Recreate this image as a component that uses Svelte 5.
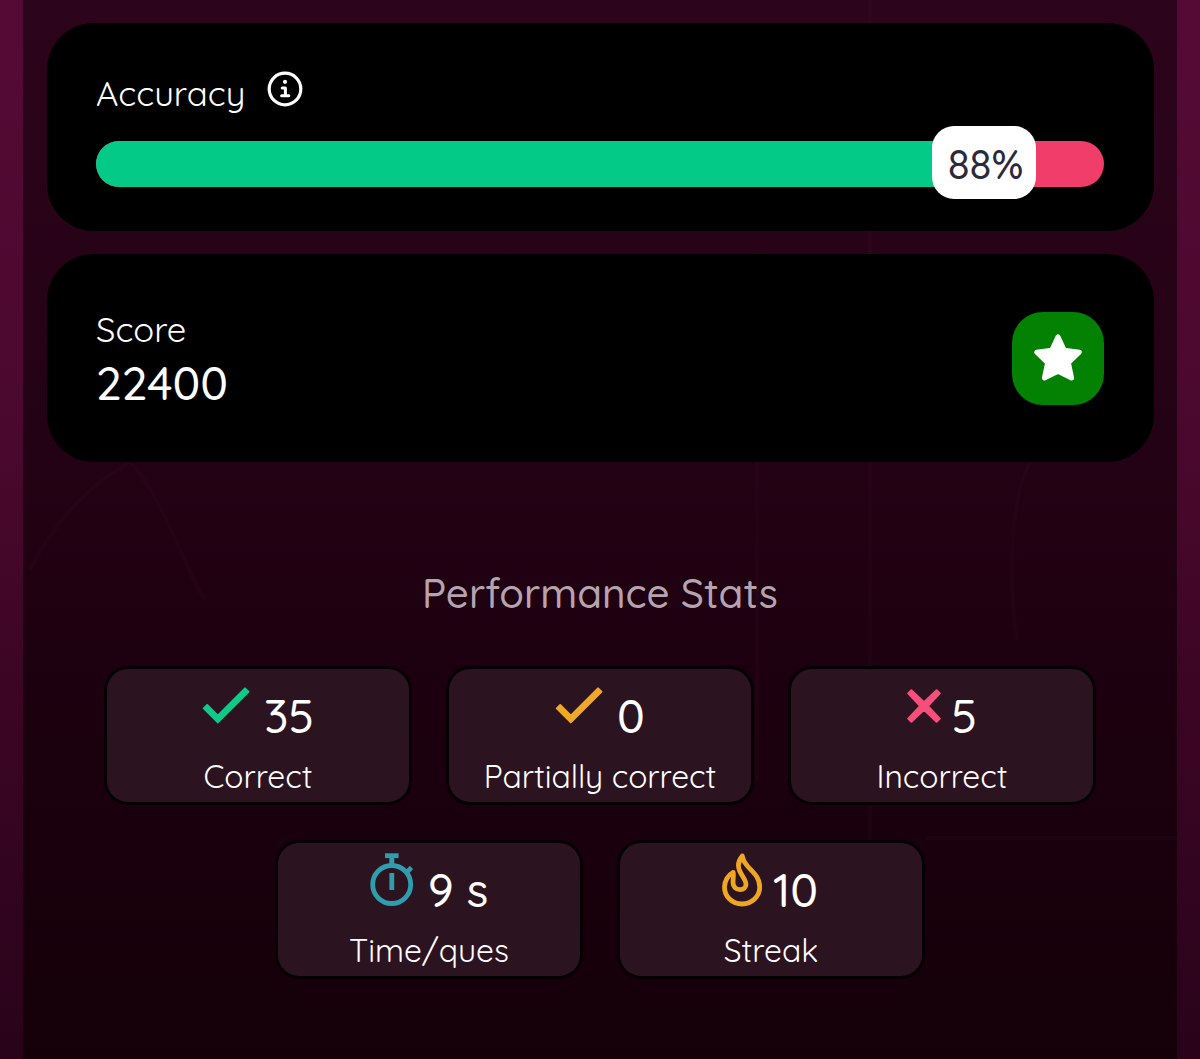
<script lang="ts">
  type Stat = { icon: string; value: string; label: string };

  const accuracy = 88;
  const score = 22400;

  const rows: Stat[][] = [
    [
      { icon: 'check', value: '35', label: 'Correct' },
      { icon: 'partial', value: '0', label: 'Partially correct' },
      { icon: 'cross', value: '5', label: 'Incorrect' }
    ],
    [
      { icon: 'timer', value: '9 s', label: 'Time/ques' },
      { icon: 'flame', value: '10', label: 'Streak' }
    ]
  ];
</script>

<main class="page">
  <div class="panel">
    <!-- faint line art behind the cards -->
    <svg class="backdrop" width="1154" height="1059" viewBox="23 0 1154 1059" fill="none" aria-hidden="true">
      <path d="M30 570C50 530 80 490 130 462C165 500 180 560 205 600" />
      <path d="M1030 462C1010 500 1008 580 1017 640" />
      <path d="M870 0V840M757 462V780" />
      <path d="M925 838H1177" />
    </svg>

    <section class="card accuracy">
      <div class="accuracy-head">
        <span class="caption">Accuracy</span>
        <svg class="info" width="36" height="36" viewBox="0 0 36 36" fill="none">
          <circle cx="18" cy="18" r="15.8" stroke="#fff" stroke-width="3.2" />
          <circle cx="18" cy="10.8" r="2.1" fill="#fff" />
          <path d="M15.2 17H18.4V24.8M14.6 24.8H21.8" stroke="#fff" stroke-width="3" stroke-linecap="round" stroke-linejoin="round" />
        </svg>
      </div>
      <div class="bar">
        <div class="bar-fill" style="width: {accuracy}%"></div>
        <div class="bar-badge" style="left: {accuracy}%">{accuracy}%</div>
      </div>
    </section>

    <section class="card score">
      <div class="score-text">
        <span class="caption">Score</span>
        <span class="score-value">{score}</span>
      </div>
      <div class="score-icon">
        <svg width="50" height="50" viewBox="0 0 50 50">
          <path d="M25 3.8L31.2 17.3L46.3 19.2L35.4 29.7L38.6 45L25 38.3L11.4 45L14.6 29.7L3.7 19.2L18.8 17.3Z" fill="#fff" stroke="#fff" stroke-width="5" stroke-linejoin="round" />
        </svg>
      </div>
    </section>

    <h2>Performance Stats</h2>

    <div class="stats">
      {#each rows as row}
        <div class="stats-row">
          {#each row as stat}
            <div class="stat">
              <div class="stat-top {stat.icon}">
                {#if stat.icon === 'check' || stat.icon === 'partial'}
                  <svg width="48" height="38" viewBox="0 0 48 38">
                    <path d="M5.2 18L15.8 28.6L43 1.4L46.4 4.8L15.8 35.4L1.8 21.4Z" fill="currentColor" stroke="currentColor" stroke-width="2" stroke-linejoin="round" />
                  </svg>
                {:else if stat.icon === 'cross'}
                  <svg width="34" height="34" viewBox="0 0 34 34">
                    <path d="M4.4 1.2L17 13.2L29.6 1.2L32.8 4.4L20.8 17L32.8 29.6L29.6 32.8L17 20.8L4.4 32.8L1.2 29.6L13.2 17L1.2 4.4Z" fill="currentColor" stroke="currentColor" stroke-width="2" stroke-linejoin="round" />
                  </svg>
                {:else if stat.icon === 'timer'}
                  <svg width="44" height="54" viewBox="0 0 44 54" fill="none" stroke="currentColor">
                    <circle cx="21.7" cy="31.5" r="19" stroke-width="4.8" />
                    <path d="M15 2.7H28.6" stroke-width="4.8" />
                    <path d="M21.8 4V12" stroke-width="5" />
                    <path d="M21.8 20V37" stroke-width="4.8" />
                    <path d="M36 20L41.5 14.5" stroke-width="4.6" />
                  </svg>
                {:else}
                  <svg width="40" height="54" viewBox="0 0 40 54" fill="none">
                    <path d="M20.3 3C16.5 7.5 15.3 12 17.5 17.5C19.5 22.5 24 27 24 31.2C24 34.5 21.4 36.6 18 36.6C13.8 36.6 11 33.6 11 29.6C11 26.5 11.7 23.5 11.2 19.3C6 22 2.5 28 2.5 34C2.5 43.5 10 51 20 51C30 51 37.7 43.5 37.7 34C37.7 23.5 30.5 19 25 12.5C22.2 9.2 20.8 6.5 20.3 3Z" stroke="currentColor" stroke-width="4.8" stroke-linejoin="round" />
                  </svg>
                {/if}
                <span class="stat-value">{stat.value}</span>
              </div>
              <span class="stat-label">{stat.label}</span>
            </div>
          {/each}
        </div>
      {/each}
    </div>
  </div>
</main>

<style>
  :global(body) {
    margin: 0;
    background: #1d0012;
  }

  .page {
    box-sizing: border-box;
    height: 1059px;
    padding: 0 23px;
    overflow: hidden;
    background: linear-gradient(180deg, #550a35 0%, #4b082e 40%, #3c0524 65%, #29031a 100%);
    font-family: Quicksand, Lato, sans-serif;
    color: #fff;
  }

  .panel {
    position: relative;
    box-sizing: border-box;
    height: 100%;
    padding: 22.5px 23.5px 0;
    background: linear-gradient(180deg, #2c041c 0%, #240215 40%, #1e0010 60%, #150009 100%);
  }

  .backdrop {
    position: absolute;
    top: 0;
    left: 0;
    stroke: rgba(255, 150, 200, 0.02);
    stroke-width: 4;
  }

  .card {
    position: relative;
    box-sizing: border-box;
    height: 208px;
    padding: 0 49.5px;
    margin-bottom: 23.5px;
    background: #000;
    border-radius: 47px;
  }

  .accuracy {
    padding-top: 48px;
  }

  .accuracy-head {
    display: flex;
    gap: 22px;
    height: 70.5px;
  }

  .caption {
    font-size: 34.6px;
    line-height: 46px;
  }

  .accuracy-head .caption {
    line-height: 44px;
  }

  .info {
    display: block;
  }

  .bar {
    position: relative;
    height: 46px;
    background: #f13d6a;
    border-radius: 23px;
  }

  .bar-fill {
    height: 100%;
    background: #04ca88;
    border-radius: 23px 0 0 23px;
  }

  .bar-badge {
    position: absolute;
    top: -15px;
    width: 104px;
    height: 73px;
    margin-left: 0.5px;
    transform: translateX(-50%);
    background: #fff;
    border-radius: 22px;
    color: #2a2a3c;
    font-size: 40.4px;
    font-weight: 500;
    line-height: 76px;
    text-align: center;
    text-indent: 4px;
  }

  .score {
    display: flex;
    align-items: center;
    justify-content: space-between;
  }

  .score-text {
    display: flex;
    flex-direction: column;
    padding-top: 3px;
  }

  .score-value {
    font-size: 46.2px;
    font-weight: 500;
    line-height: 62px;
  }

  .score-icon {
    display: flex;
    align-items: center;
    justify-content: center;
    width: 92px;
    height: 93px;
    background: #028102;
    border-radius: 31px;
  }

  h2 {
    margin: 103px 0 44.5px;
    color: #b5a4b0;
    font-size: 40.4px;
    font-weight: 500;
    line-height: 56px;
    text-align: center;
  }

  .stats {
    position: relative;
    display: flex;
    flex-direction: column;
    gap: 35px;
  }

  .stats-row {
    display: flex;
    justify-content: center;
    gap: 34px;
  }

  .stat {
    box-sizing: border-box;
    display: flex;
    flex-direction: column;
    align-items: center;
    width: 308px;
    height: 139px;
    background: #2c1320;
    border: 3px solid #060003;
    border-radius: 24px;
  }

  .stat-top {
    display: flex;
    align-items: center;
    height: 75px;
    gap: 14px;
  }

  .stat-top.cross {
    gap: 10px;
  }

  .stat-top.flame {
    gap: 11px;
    margin-right: 2px;
  }

  .stat-value {
    color: #fff;
    font-size: 46.2px;
    font-weight: 500;
    line-height: 58px;
    padding-top: 20px;
  }

  .stat-label {
    font-size: 31.8px;
    font-weight: 400;
    line-height: 64px;
  }

  .check {
    color: #0fca88;
  }

  .partial {
    color: #efa929;
  }

  .cross {
    color: #f64f7b;
  }

  .timer {
    color: #2e9dac;
  }

  .flame {
    color: #efa623;
  }
</style>
